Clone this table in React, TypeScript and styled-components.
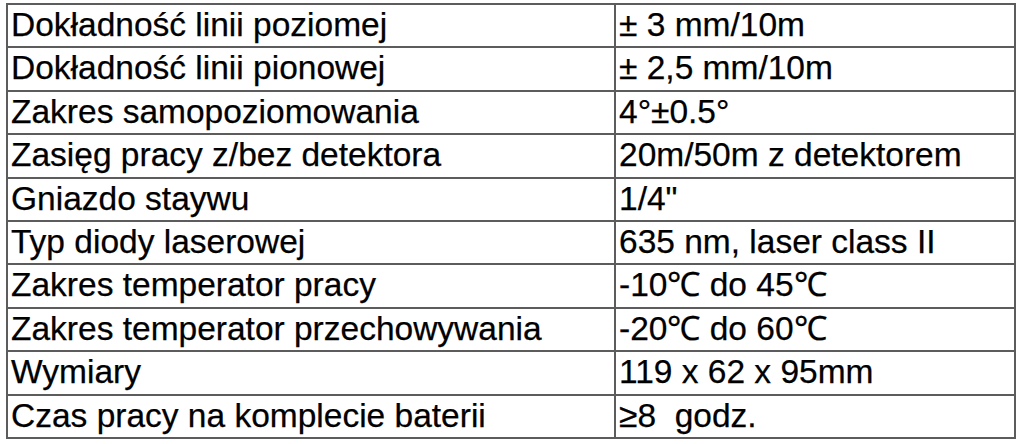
import { Fragment } from "react";
import styled, { createGlobalStyle } from "styled-components";

const GlobalStyle = createGlobalStyle`
  html, body {
    margin: 0;
    padding: 0;
    background: #ffffff;
  }
`;

const Page = styled.div`
  padding: 3px 0 0 6px;
`;

const SpecTable = styled.div`
  width: 1010px;
  display: grid;
  grid-template-columns: 608px 1fr;
  grid-auto-rows: 43.4px;
  border-top: 2px solid #5c5c5c;
  border-left: 2px solid #5c5c5c;
  box-sizing: border-box;
  font-family: "Liberation Sans", Arial, sans-serif;
  color: #000;
`;

const Cell = styled.div`
  border-right: 2px solid #5c5c5c;
  border-bottom: 2px solid #5c5c5c;
  box-sizing: border-box;
  padding-left: 3px;
  font-size: 33.5px;
  line-height: 40px;
  white-space: pre;
  overflow: hidden;
  -webkit-text-stroke: 0.25px #000;
`;

const specs: [string, string][] = [
  ["Dokładność linii poziomej", "± 3 mm/10m"],
  ["Dokładność linii pionowej", "± 2,5 mm/10m"],
  ["Zakres samopoziomowania", "4°±0.5°"],
  ["Zasięg pracy z/bez detektora", "20m/50m z detektorem"],
  ["Gniazdo staywu", '1/4"'],
  ["Typ diody laserowej", "635 nm, laser class II"],
  ["Zakres temperator pracy", "-10℃ do 45℃"],
  ["Zakres temperator przechowywania", "-20℃ do 60℃"],
  ["Wymiary", "119 x 62 x 95mm"],
  ["Czas pracy na komplecie baterii", "≥8  godz."],
];

export default function App() {
  return (
    <>
      <GlobalStyle />
      <Page>
        <SpecTable>
          {specs.map(([label, value]) => (
            <Fragment key={label}>
              <Cell>{label}</Cell>
              <Cell>{value}</Cell>
            </Fragment>
          ))}
        </SpecTable>
      </Page>
    </>
  );
}
